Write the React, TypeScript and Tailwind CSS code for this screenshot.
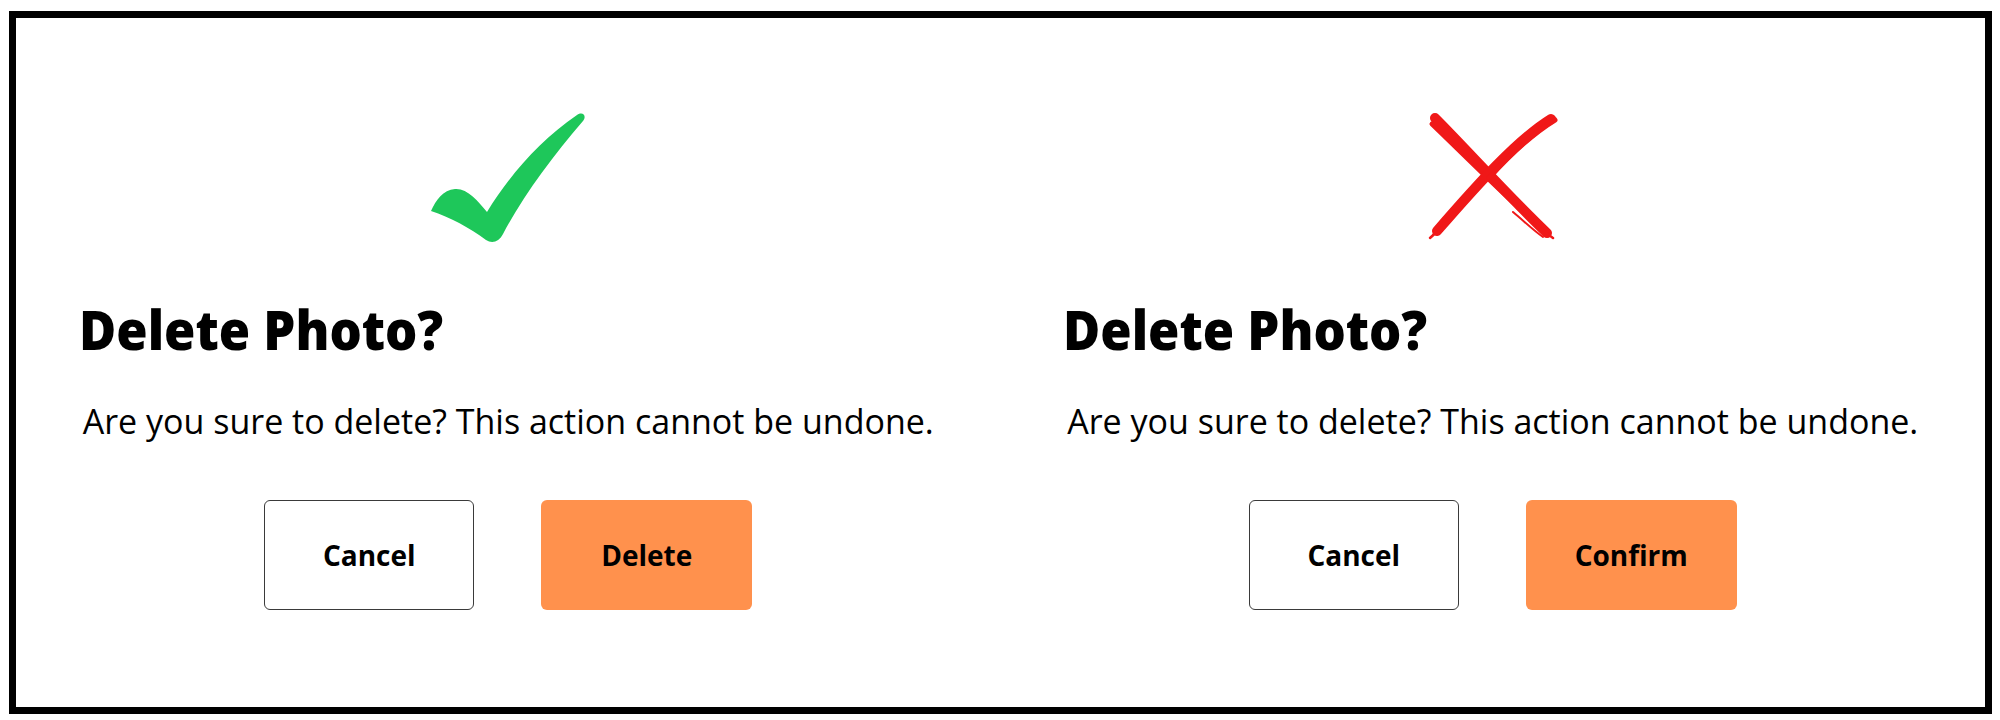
import React from 'react';

const CheckMark = () => (
  <svg viewBox="28 18 160 136" className="h-[136px] w-[160px]">
    <path
      d="M31 121 C36 110 43 100 55 99 C67 98 78 111 87 122 C109 86 140 50 177 25 C183 21 187 26 183 31 C152 67 123 106 103 144 C99 152 92 154 86 150 C70 138 50 127 31 121 Z"
      fill="#1ec75a"
    />
  </svg>
);

const CrossMark = () => (
  <svg viewBox="28 8 136 136" className="h-[136px] w-[136px]">
    <g stroke="#f01818" strokeLinecap="round" fill="none">
      <path d="M38 18 C70 50 110 95 150 133" strokeWidth="10" />
      <path d="M35 24 C60 48 90 78 118 104" strokeWidth="5" />
      <path d="M120 108 C132 119 142 128 156 138" strokeWidth="2.5" />
      <path d="M116 112 C128 122 136 130 146 137" strokeWidth="2" />
      <path d="M154 19 C120 40 80 85 40 131" strokeWidth="10" />
      <path d="M158 20 C135 34 112 56 92 78" strokeWidth="5" />
      <path d="M64 108 C52 120 42 130 33 138" strokeWidth="2.5" />
      <path d="M58 110 C50 120 40 128 36 135" strokeWidth="2" />
    </g>
  </svg>
);

type DialogProps = {
  icon: React.ReactNode;
  action: string;
};

const Dialog = ({ icon, action }: DialogProps) => {
  return (
    <div className="flex justify-center pt-[90px]">
      <div className="flex w-fit flex-col">
        <div className="flex h-[136px] justify-center">{icon}</div>
        <h2 className="-ml-[4px] mt-[58px] origin-left scale-x-[0.94] text-[54px] font-extrabold leading-none text-black">
          Delete Photo?
        </h2>
        <p className="mt-[48px] text-[34px] leading-none text-black">
          Are you sure to delete? This action cannot be undone.
        </p>
        <div className="mt-[62px] flex justify-center gap-[67px]">
          <button className="flex h-[110px] w-[210px] items-center justify-center rounded-md border-[1.5px] border-[#3a3a3a] bg-white text-[28px] font-bold text-black">
            Cancel
          </button>
          <button className="flex h-[110px] w-[211px] items-center justify-center rounded-md bg-[#ff914d] text-[28px] font-bold text-black">
            {action}
          </button>
        </div>
      </div>
    </div>
  );
};

export default function App() {
  return (
    <div className="h-[720px] w-[2000px] bg-white pl-[9px] pt-[11px] font-['Open_Sans',sans-serif]">
      <div className="grid h-[703px] w-[1983px] grid-cols-2 border-[7px] border-black">
        <Dialog icon={<CheckMark />} action="Delete" />
        <Dialog icon={<CrossMark />} action="Confirm" />
      </div>
    </div>
  );
}
